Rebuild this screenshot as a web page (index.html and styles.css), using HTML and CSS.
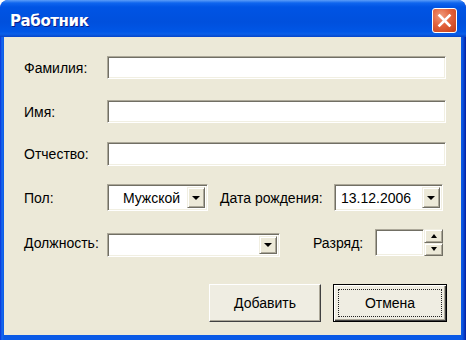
FILE: index.html
```html
<!DOCTYPE html>
<html lang="ru">

<head>
  <meta charset="UTF-8">
  <title>Работник</title>
  <link rel="stylesheet" href="styles.css">
</head>

<body>
  <div class="window">
    <div class="titlebar">
      <span class="title">Работник</span>
      <span class="close-btn">
        <svg width="23" height="23" viewBox="0 0 23 23">
          <path d="M6.5 6.5 L16.5 16.5 M16.5 6.5 L6.5 16.5" stroke="#fff" stroke-width="2.6" stroke-linecap="square" fill="none" />
        </svg>
      </span>
    </div>

    <div class="client">
      <div class="row row-1">
        <span class="label">Фамилия:</span>
        <div class="field field-wide"></div>
      </div>
      <div class="row row-2">
        <span class="label">Имя:</span>
        <div class="field field-wide"></div>
      </div>
      <div class="row row-3">
        <span class="label">Отчество:</span>
        <div class="field field-wide"></div>
      </div>

      <div class="row row-4">
        <span class="label">Пол:</span>
        <div class="field combo combo-sex">
          <span class="combo-text center">Мужской</span>
          <span class="drop-btn"><i class="arrow-down"></i></span>
        </div>
        <span class="label label-date">Дата рождения:</span>
        <div class="field combo combo-date">
          <span class="combo-text">13.12.2006</span>
          <span class="drop-btn"><i class="arrow-down"></i></span>
        </div>
      </div>

      <div class="row row-5">
        <span class="label">Должность:</span>
        <div class="field combo combo-post">
          <span class="combo-text"></span>
          <span class="drop-btn"><i class="arrow-down"></i></span>
        </div>
        <span class="label label-rank">Разряд:</span>
        <div class="field field-rank"></div>
        <div class="spinner">
          <span class="spin-btn"><i class="arrow-up"></i></span>
          <span class="spin-btn"><i class="arrow-down small"></i></span>
        </div>
      </div>

      <div class="buttons">
        <button class="btn">Добавить</button>
        <button class="btn btn-default"><span class="focus">Отмена</span></button>
      </div>
    </div>
  </div>
</body>

</html>
```

FILE: styles.css
```css
body {
  margin: 0;
  background: #fff;
  font-family: "Liberation Sans", Arial, sans-serif;
  font-size: 14px;
  color: #000;
}

.window {
  width: 466px;
  height: 340px;
  display: flex;
  flex-direction: column;
  border-radius: 8px 8px 0 0;
  background: linear-gradient(to right, #0831d9 0, #166aee 2px, #0a5ae6 4px, #0a5ae6 calc(100% - 4px), #0a3fc8 calc(100% - 2px), #001ea0 100%);
  overflow: hidden;
}

/* title bar */
.titlebar {
  height: 37px;
  flex: none;
  display: flex;
  align-items: center;
  justify-content: space-between;
  padding: 0 9px 0 10px;
  border-radius: 8px 8px 0 0;
  background: linear-gradient(#5b9df8 0, #0f65ee 3px, #0054e4 7px, #0050dd 60%, #0056e6 85%, #0a5fe8 92%, #0644c8 100%);
}

.title {
  color: #fff;
  font-family: "DejaVu Sans", sans-serif;
  font-weight: bold;
  font-size: 15px;
  letter-spacing: -0.4px;
  text-shadow: 1px 1px 0 #0a1e8a;
  margin-top: 4px;
}

.close-btn {
  width: 23px;
  height: 23px;
  margin-top: 3px;
  border: 1px solid #fff;
  border-radius: 3px;
  background: radial-gradient(circle at 35% 30%, #f09a7c 0, #e2623c 45%, #c43c16 100%);
  display: flex;
}

/* dialog body */
.client {
  flex: 1;
  margin: 0 5px 5px 4px;
  padding: 19px 15px 0 20px;
  background: #ece9d8;
  display: flex;
  flex-direction: column;
}

.row {
  display: flex;
  align-items: center;
}

.row-1 { height: 23px; }
.row-2 { height: 23px; margin-top: 21px; }
.row-3 { height: 24px; margin-top: 19px; }
.row-4 { height: 27px; margin-top: 18px; }
.row-5 { height: 28px; margin-top: 18px; }

.label {
  width: 83px;
  flex: none;
}

.label-date {
  width: 114px;
  margin-left: 12px;
}

.label-rank {
  width: 62px;
  margin-left: 33px;
}

.field {
  box-sizing: border-box;
  height: 100%;
  background: #fff;
  border: 1px solid;
  border-color: #aca899 #fff #fff #aca899;
  box-shadow: inset 1px 1px 0 #716f64, inset -1px -1px 0 #f1efe2;
}

.field-wide {
  flex: 1;
}

.combo {
  display: flex;
  align-items: center;
  padding: 2px;
}

.combo-text {
  flex: 1;
  padding-left: 4px;
}

.combo-text.center {
  text-align: center;
  padding-left: 6px;
}

.combo-sex {
  width: 101px;
  height: 27px;
}

.combo-date {
  width: 109px;
  height: 27px;
}

.combo-post {
  width: 173px;
  height: 24px;
  align-self: flex-end;
}

.drop-btn,
.spin-btn {
  box-sizing: border-box;
  display: flex;
  align-items: center;
  justify-content: center;
  background: #ece9d8;
  border: 1px solid;
  border-color: #f1efe2 #716f64 #716f64 #f1efe2;
  box-shadow: inset 1px 1px 0 #fff, inset -1px -1px 0 #aca899;
}

.drop-btn {
  width: 18px;
  align-self: stretch;
}

.arrow-down,
.arrow-up {
  width: 0;
  height: 0;
  border-left: 4px solid transparent;
  border-right: 4px solid transparent;
}

.arrow-down {
  border-top: 4px solid #000;
}

.arrow-up {
  border-bottom: 4px solid #000;
}

.arrow-down.small,
.arrow-up {
  border-left-width: 3.5px;
  border-right-width: 3.5px;
}

.field-rank {
  width: 49px;
  height: 27px;
  align-self: flex-start;
}

.spinner {
  width: 19px;
  height: 27px;
  align-self: flex-start;
  display: flex;
  flex-direction: column;
}

.spin-btn {
  flex: 1;
}

/* buttons */
.buttons {
  display: flex;
  justify-content: flex-end;
  gap: 12px;
  margin-top: 27px;
  margin-right: -1px;
}

.btn {
  box-sizing: border-box;
  width: 112px;
  height: 38px;
  font: inherit;
  color: #000;
  background: #efede2;
  border: 1px solid;
  border-color: #fff #404040 #404040 #fff;
  box-shadow: inset -1px -1px 0 #aca899;
  padding: 0;
  cursor: pointer;
}

.btn-default {
  width: 114px;
  border: 1px solid #000;
  box-shadow: inset 1px 1px 0 #fff, inset -1px -1px 0 #404040, inset -2px -2px 0 #aca899;
  padding: 4px;
}

.focus {
  box-sizing: border-box;
  display: flex;
  align-items: center;
  justify-content: center;
  height: 100%;
  border: 1px dotted #222;
}
```
